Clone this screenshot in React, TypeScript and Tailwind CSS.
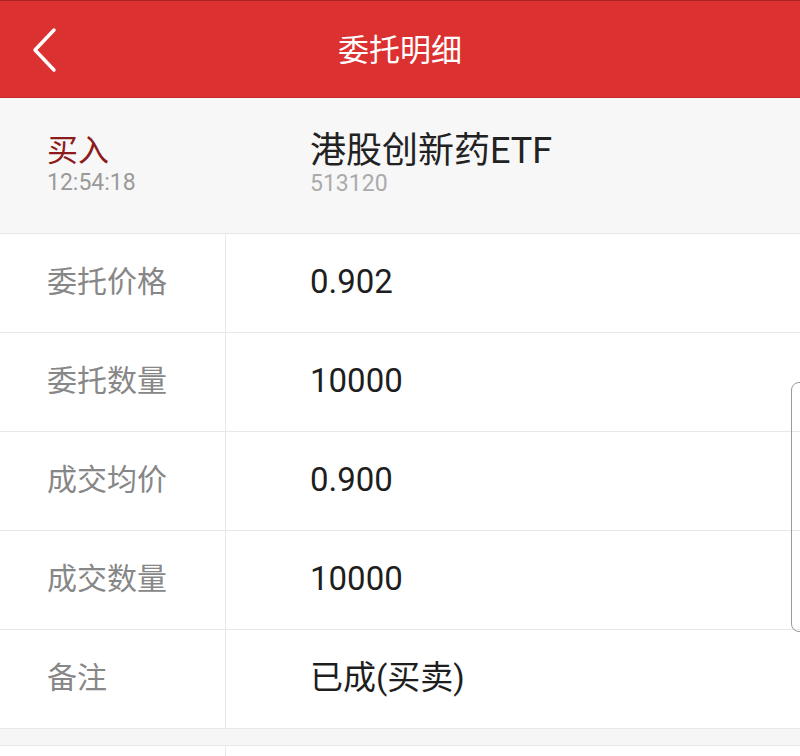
// 委托明细 — order detail view

const FONT = { fontFamily: 'Roboto, "Noto Sans CJK SC", sans-serif' };

interface Row {
  label: string;
  value: string;
}

const ROWS: Row[] = [
  { label: "委托价格", value: "0.902" },
  { label: "委托数量", value: "10000" },
  { label: "成交均价", value: "0.900" },
  { label: "成交数量", value: "10000" },
  { label: "备注", value: "已成(买卖)" },
];

function BackIcon() {
  return (
    <svg width="30" height="46" viewBox="0 0 30 46" fill="none">
      <path d="M24 3 L5 23 L24 43" stroke="white" strokeWidth="3.5" strokeLinecap="round" strokeLinejoin="round" />
    </svg>
  );
}

export default function App() {
  return (
    <div className="relative w-[800px] h-[756px] overflow-hidden bg-white" style={FONT}>
      {/* Header */}
      <div className="h-[98px] bg-[#dc3131] border-t border-t-[#a82222] border-b border-b-[#c62a2a] flex items-center relative">
        <div className="absolute left-[30px] top-[26px]">
          <BackIcon />
        </div>
        <div className="flex-1 text-center text-white text-[31px] leading-none pt-[3px]">委托明细</div>
      </div>

      {/* Summary */}
      <div className="h-[136px] bg-[#f7f7f7] border-b border-[#e6e6e6] flex items-center">
        <div className="w-[310px] pl-[47px] flex flex-col pb-[1px]">
          <span className="text-[31px] leading-[36px] text-[#8e1b1b]">买入</span>
          <span className="text-[23px] leading-[28px] text-[#9a9a9a]">12:54:18</span>
        </div>
        <div className="flex flex-col pb-[1px]">
          <span className="text-[36px] leading-[38px] text-[#222]">港股创新药ETF</span>
          <span className="text-[23px] leading-[28px] text-[#ababab]">513120</span>
        </div>
      </div>

      {/* Rows */}
      {ROWS.map((r) => (
        <div key={r.label} className="h-[99px] flex border-b border-[#e8e8e8]">
          <div className="w-[226px] border-r border-[#e8e8e8] pl-[47px] pb-[3px] flex items-center text-[30px] text-[#878787]">
            {r.label}
          </div>
          <div className="pl-[84px] pb-[3px] flex items-center text-[33px] text-[#1e1e1e]">{r.value}</div>
        </div>
      ))}

      <div className="h-[17px] bg-[#f6f6f6] border-b border-[#e8e8e8]" />
      <div className="h-[40px] flex">
        <div className="w-[226px] border-r border-[#e8e8e8]" />
      </div>

      {/* scroll edge */}
      <div className="absolute left-[791px] top-[382px] w-[20px] h-[250px] rounded-[8px] border border-[#9a9a9a]" />
    </div>
  );
}
